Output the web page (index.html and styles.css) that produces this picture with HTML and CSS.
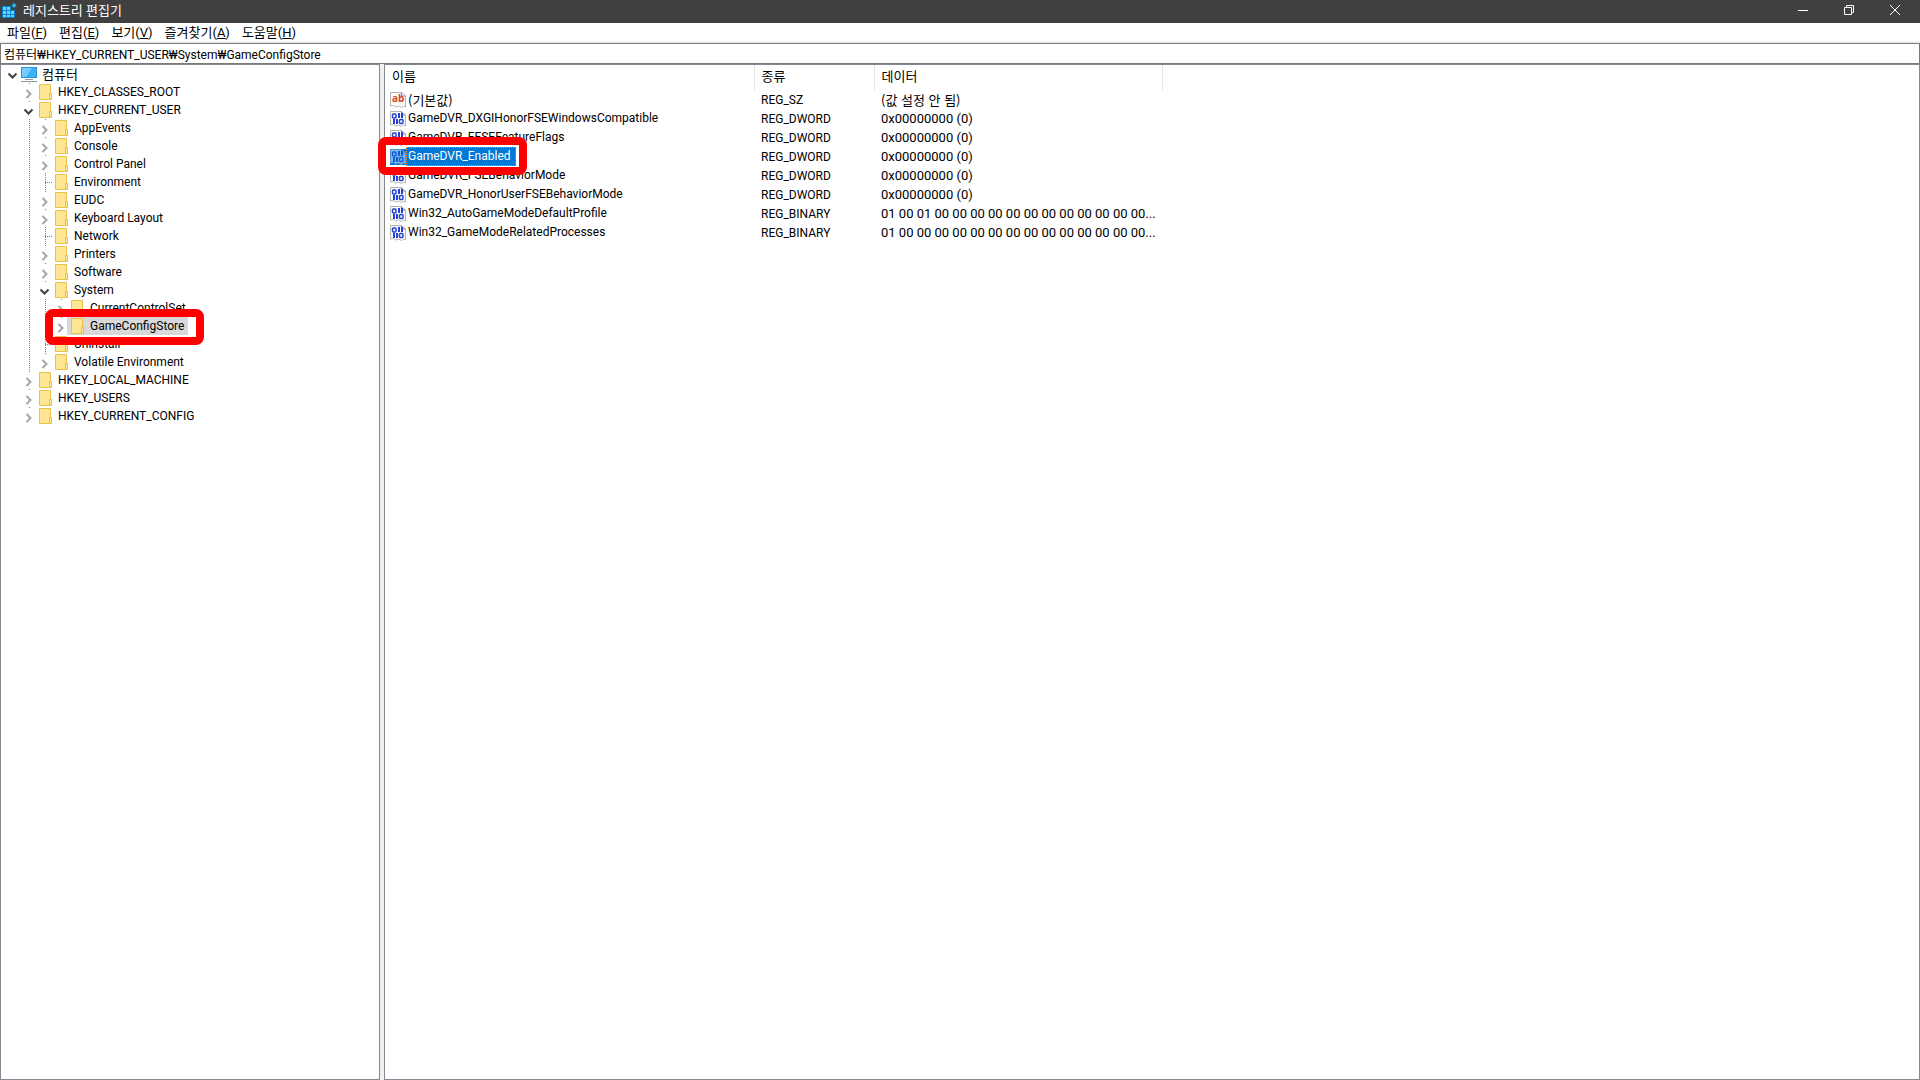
FILE: index.html
```
<!DOCTYPE html>
<html lang="ko">
<head>
  <meta charset="UTF-8">
  <title>레지스트리 편집기</title>
  <link rel="stylesheet" href="styles.css">
</head>
<body>

  <!-- Shared icons -->
  <svg class="symbols" width="0" height="0" aria-hidden="true">
    <symbol id="icon-app" viewBox="0 0 16 16">
      <path fill="#0a84cc" d="M1 3h9v4h4v8H1z"/>
      <path fill="#66d4ff" d="M2 4h3v3H2zM6 4h3v3H6zM2 8h3v3H2zM6 8h3v3H6zM10 8h3v3h-3zM2 12h3v2H2zM6 12h3v2H6zM10 12h3v2h-3z"/>
      <path fill="#2fb4ee" d="M13 0l2.500 2.500L13 5l-2.500-2.500z"/>
    </symbol>
    <symbol id="icon-computer" viewBox="0 0 16 16">
      <path fill="#2a8fd4" d="M0 1h16v11H0z"/>
      <path fill="#3db2f5" d="M1 2h14v9H1z"/>
      <path fill="#74cdfb" d="M1 2h10L5 11H1z"/>
      <path fill="#8a9ba8" d="M4 13h8v1H4zM0 15h16v1H0z"/>
    </symbol>
    <symbol id="icon-folder" viewBox="0 0 16 16">
      <path fill="#ffe694" stroke="#e8c24a" d="M2.500 .5h11v9h1v6h-12z"/>
      <path fill="#ffe694" stroke="#e8c24a" d="M12.500 9.500h2v6h-2z"/>
    </symbol>
    <symbol id="icon-page" viewBox="0 0 16 16">
      <path fill="#fafafa" stroke="#b4b4b4" d="M.5 .5h11l4 3.500v11l-2-1-2 1.500-3-1.500-3 1-2-1.500-3 .5z"/>
      <path fill="none" stroke="#8c8c8c" d="M11.500 .5v3.500h4"/>
    </symbol>
    <symbol id="icon-binary" viewBox="0 0 16 16">
      <use href="#icon-page"/>
      <g fill="none" stroke="#2340d8" stroke-width="1.500">
        <rect x="2.500" y="3" width="3.500" height="4" rx="1"/>
        <rect x="9.500" y="8.500" width="3.500" height="4" rx="1"/>
      </g>
      <path fill="#2340d8" d="M8 2h2v5H8zM11 2h2v5h-2zM3 8h2v5H3zM6 8h2v5H6z"/>
    </symbol>
    <symbol id="icon-closed" viewBox="0 0 16 16">
      <path fill="none" stroke="#a6a6a6" stroke-width="2" d="M5.500 6l4 4-4 4"/>
    </symbol>
    <symbol id="icon-open" viewBox="0 0 16 16">
      <path fill="none" stroke="#404040" stroke-width="2" d="M3.500 7.500l4 4 4-4"/>
    </symbol>
  </svg>

  <!-- Title bar -->
  <header class="titlebar">
    <svg class="icon"><use href="#icon-app"/></svg>
    <h1>레지스트리 편집기</h1>
    <div class="window-buttons">
      <button aria-label="최소화"><svg viewBox="0 0 10 10"><path d="M0 5.500h10"/></svg></button>
      <button aria-label="이전 크기로 복원"><svg viewBox="0 0 10 10"><path d="M.5 2.500h7v7h-7zM2.500 2.500v-2h7v7h-2"/></svg></button>
      <button aria-label="닫기"><svg viewBox="0 0 10 10"><path d="M0 0l10 10M10 0L0 10"/></svg></button>
    </div>
  </header>

  <!-- Menu -->
  <nav class="menu">
    <button>파일(<u>F</u>)</button>
    <button>편집(<u>E</u>)</button>
    <button>보기(<u>V</u>)</button>
    <button>즐겨찾기(<u>A</u>)</button>
    <button>도움말(<u>H</u>)</button>
  </nav>

  <!-- Address -->
  <input class="address" type="text" aria-label="주소" value="컴퓨터₩HKEY_CURRENT_USER₩System₩GameConfigStore">

  <main class="panes">

    <!-- Key tree -->
    <section class="tree">
      <ul class="root">
        <li>
          <div class="row"><button class="toggle" aria-label="접기"><svg class="icon"><use href="#icon-open"/></svg></button><span class="key ko"><svg class="icon"><use href="#icon-computer"/></svg>컴퓨터</span></div>
          <ul>
            <li><div class="row"><button class="toggle" aria-label="펼치기"><svg class="icon"><use href="#icon-closed"/></svg></button><span class="key"><svg class="icon"><use href="#icon-folder"/></svg>HKEY_CLASSES_ROOT</span></div></li>
            <li>
              <div class="row"><button class="toggle" aria-label="접기"><svg class="icon"><use href="#icon-open"/></svg></button><span class="key"><svg class="icon"><use href="#icon-folder"/></svg>HKEY_CURRENT_USER</span></div>
              <ul>
                <li><div class="row"><button class="toggle" aria-label="펼치기"><svg class="icon"><use href="#icon-closed"/></svg></button><span class="key"><svg class="icon"><use href="#icon-folder"/></svg>AppEvents</span></div></li>
                <li><div class="row"><button class="toggle" aria-label="펼치기"><svg class="icon"><use href="#icon-closed"/></svg></button><span class="key"><svg class="icon"><use href="#icon-folder"/></svg>Console</span></div></li>
                <li><div class="row"><button class="toggle" aria-label="펼치기"><svg class="icon"><use href="#icon-closed"/></svg></button><span class="key"><svg class="icon"><use href="#icon-folder"/></svg>Control Panel</span></div></li>
                <li><div class="row"><span class="branch"></span><span class="key"><svg class="icon"><use href="#icon-folder"/></svg>Environment</span></div></li>
                <li><div class="row"><button class="toggle" aria-label="펼치기"><svg class="icon"><use href="#icon-closed"/></svg></button><span class="key"><svg class="icon"><use href="#icon-folder"/></svg>EUDC</span></div></li>
                <li><div class="row"><button class="toggle" aria-label="펼치기"><svg class="icon"><use href="#icon-closed"/></svg></button><span class="key"><svg class="icon"><use href="#icon-folder"/></svg>Keyboard Layout</span></div></li>
                <li><div class="row"><span class="branch"></span><span class="key"><svg class="icon"><use href="#icon-folder"/></svg>Network</span></div></li>
                <li><div class="row"><button class="toggle" aria-label="펼치기"><svg class="icon"><use href="#icon-closed"/></svg></button><span class="key"><svg class="icon"><use href="#icon-folder"/></svg>Printers</span></div></li>
                <li><div class="row"><button class="toggle" aria-label="펼치기"><svg class="icon"><use href="#icon-closed"/></svg></button><span class="key"><svg class="icon"><use href="#icon-folder"/></svg>Software</span></div></li>
                <li>
                  <div class="row"><button class="toggle" aria-label="접기"><svg class="icon"><use href="#icon-open"/></svg></button><span class="key"><svg class="icon"><use href="#icon-folder"/></svg>System</span></div>
                  <ul>
                    <li><div class="row"><button class="toggle" aria-label="펼치기"><svg class="icon"><use href="#icon-closed"/></svg></button><span class="key"><svg class="icon"><use href="#icon-folder"/></svg>CurrentControlSet</span></div></li>
                    <li><div class="row"><button class="toggle" aria-label="펼치기"><svg class="icon"><use href="#icon-closed"/></svg></button><span class="key current marked"><svg class="icon"><use href="#icon-folder"/></svg>GameConfigStore</span></div></li>
                  </ul>
                </li>
                <li><div class="row"><span class="branch"></span><span class="key"><svg class="icon"><use href="#icon-folder"/></svg>Uninstall</span></div></li>
                <li><div class="row"><button class="toggle" aria-label="펼치기"><svg class="icon"><use href="#icon-closed"/></svg></button><span class="key"><svg class="icon"><use href="#icon-folder"/></svg>Volatile Environment</span></div></li>
              </ul>
            </li>
            <li><div class="row"><button class="toggle" aria-label="펼치기"><svg class="icon"><use href="#icon-closed"/></svg></button><span class="key"><svg class="icon"><use href="#icon-folder"/></svg>HKEY_LOCAL_MACHINE</span></div></li>
            <li><div class="row"><button class="toggle" aria-label="펼치기"><svg class="icon"><use href="#icon-closed"/></svg></button><span class="key"><svg class="icon"><use href="#icon-folder"/></svg>HKEY_USERS</span></div></li>
            <li><div class="row"><button class="toggle" aria-label="펼치기"><svg class="icon"><use href="#icon-closed"/></svg></button><span class="key"><svg class="icon"><use href="#icon-folder"/></svg>HKEY_CURRENT_CONFIG</span></div></li>
          </ul>
        </li>
      </ul>
    </section>

    <!-- Values -->
    <section class="values">
      <table>
        <colgroup>
          <col class="col-name">
          <col class="col-type">
          <col class="col-data">
        </colgroup>
        <thead>
          <tr><th>이름</th><th>종류</th><th>데이터</th></tr>
        </thead>
        <tbody>
          <tr><td><span class="value"><svg class="icon" viewBox="0 0 16 16"><use href="#icon-page"/><text x="2" y="10" class="icon-ab">ab</text></svg><span class="name ko">(기본값)</span></span></td><td>REG_SZ</td><td class="ko">(값 설정 안 됨)</td></tr>
          <tr><td><span class="value"><svg class="icon"><use href="#icon-binary"/></svg><span class="name">GameDVR_DXGIHonorFSEWindowsCompatible</span></span></td><td>REG_DWORD</td><td>0x00000000 (0)</td></tr>
          <tr><td><span class="value"><svg class="icon"><use href="#icon-binary"/></svg><span class="name">GameDVR_EFSEFeatureFlags</span></span></td><td>REG_DWORD</td><td>0x00000000 (0)</td></tr>
          <tr><td><span class="value selected marked"><svg class="icon"><use href="#icon-binary"/></svg><span class="name">GameDVR_Enabled</span></span></td><td>REG_DWORD</td><td>0x00000000 (0)</td></tr>
          <tr><td><span class="value"><svg class="icon"><use href="#icon-binary"/></svg><span class="name">GameDVR_FSEBehaviorMode</span></span></td><td>REG_DWORD</td><td>0x00000000 (0)</td></tr>
          <tr><td><span class="value"><svg class="icon"><use href="#icon-binary"/></svg><span class="name">GameDVR_HonorUserFSEBehaviorMode</span></span></td><td>REG_DWORD</td><td>0x00000000 (0)</td></tr>
          <tr><td><span class="value"><svg class="icon"><use href="#icon-binary"/></svg><span class="name">Win32_AutoGameModeDefaultProfile</span></span></td><td>REG_BINARY</td><td>01 00 01 00 00 00 00 00 00 00 00 00 00 00 00...</td></tr>
          <tr><td><span class="value"><svg class="icon"><use href="#icon-binary"/></svg><span class="name">Win32_GameModeRelatedProcesses</span></span></td><td>REG_BINARY</td><td>01 00 00 00 00 00 00 00 00 00 00 00 00 00 00...</td></tr>
        </tbody>
      </table>
    </section>

  </main>

</body>
</html>
```

FILE: styles.css
```
* {
  box-sizing: border-box;
}
body {
  margin: 0;
  height: 100vh;
  display: flex;
  flex-direction: column;
  background: #f0f0f0;
  color: #000;
  font: 12px/18px Roboto, "Noto Sans CJK KR", sans-serif;
}
button {
  border: none;
  padding: 0;
  background: none;
  color: inherit;
  font: inherit;
}
ul {
  list-style: none;
  margin: 0;
  padding: 0;
}
.symbols {
  position: absolute;
}
.icon {
  display: block;
  width: 16px;
  height: 16px;
  flex: none;
}
.icon-ab {
  font: bold 10px "Open Sans", sans-serif;
  fill: #d24726;
}
.ko, .titlebar h1, .menu, th, td:last-child {
  font-size: 13px;
}
.ko {
  font-family: "Noto Sans CJK KR", sans-serif;
}

/* Title bar */
.titlebar {
  display: flex;
  align-items: flex-start;
  height: 23px;
  flex: none;
  padding: 2px 2px 0 1px;
  background: #404040;
  color: #fff;
}
.titlebar .icon {
  margin-top: 1px;
}
.titlebar h1 {
  margin: 0 auto 0 6px;
  font-weight: normal;
}
.window-buttons {
  display: flex;
}
.window-buttons button {
  display: flex;
  align-items: center;
  justify-content: center;
  width: 46px;
  height: 16px;
}
.window-buttons svg {
  width: 10px;
  height: 10px;
  fill: none;
  stroke: #fff;
}

/* Menu */
.menu {
  display: flex;
  gap: 12px;
  height: 18px;
  flex: none;
  padding: 1px 0 0 7px;
  background: #fff;
}

.address {
  width: 100%;
  height: 21px;
  flex: none;
  margin: 2px 0 0;
  padding: 0 3px;
  border: 1px solid #7a7a7a;
  background: #fff;
  color: #000;
  font: inherit;
}

/* Panes */
.panes {
  display: flex;
  gap: 4px;
  flex: 1;
  min-height: 0;
}
.tree, .values {
  border: 1px solid #828790;
  background: #fff;
}
.tree {
  width: 380px;
  flex: none;
}
.values {
  flex: 1;
}

/* Tree */
.root {
  padding-left: 4px;
}
.tree ul ul {
  padding-left: 16px;
}
.tree ul ul > li {
  background: repeating-linear-gradient(#808080 0 1px, transparent 1px 2px) 8px 0 / 1px 100% no-repeat;
}
.tree ul ul > li:last-child {
  background-size: 1px 9px;
}
.row {
  display: flex;
  align-items: center;
  height: 18px;
}
.toggle {
  width: 16px;
  background: #fff;
}
.branch {
  width: 16px;
  height: 1px;
  background: repeating-linear-gradient(90deg, #808080 0 1px, transparent 1px 2px) 8px 0 no-repeat;
}
.key {
  position: relative;
  display: flex;
  align-items: center;
  gap: 5px;
  height: 18px;
  margin-left: -2px;
  padding: 0 4px 0 2px;
}
.key.current {
  background: #d9d9d9;
}

/* Value list */
table {
  table-layout: fixed;
  width: 777px;
  border-collapse: collapse;
}
.col-name {
  width: 369px;
}
.col-type {
  width: 120px;
}
.col-data {
  width: 288px;
}
th {
  height: 25px;
  padding: 0 7px 2px;
  border-right: 1px solid #e5e5e5;
  font-weight: normal;
  text-align: left;
}
td {
  height: 19px;
  padding: 0 7px;
  white-space: nowrap;
}
td:first-child {
  padding-left: 5px;
}
.value {
  position: relative;
  display: inline-flex;
  align-items: center;
  vertical-align: top;
}
.name {
  height: 19px;
  padding: 0 5px 0 2px;
  line-height: 19px;
}
.selected .name {
  background: #0078d7;
  color: #fff;
  outline: 1px dotted #ff8728;
  outline-offset: -1px;
}
.selected .icon {
  background: #0078d7;
}
.selected .icon use {
  opacity: 0.5;
}

/* Red marker around an entry */
.marked::after {
  content: "";
  position: absolute;
  z-index: 1;
  inset: -8px -16px -10px -22px;
  border: 8px solid #f00;
  border-radius: 8px;
}
.value.marked::after {
  inset: -10px -11px -9px -12px;
}
```
